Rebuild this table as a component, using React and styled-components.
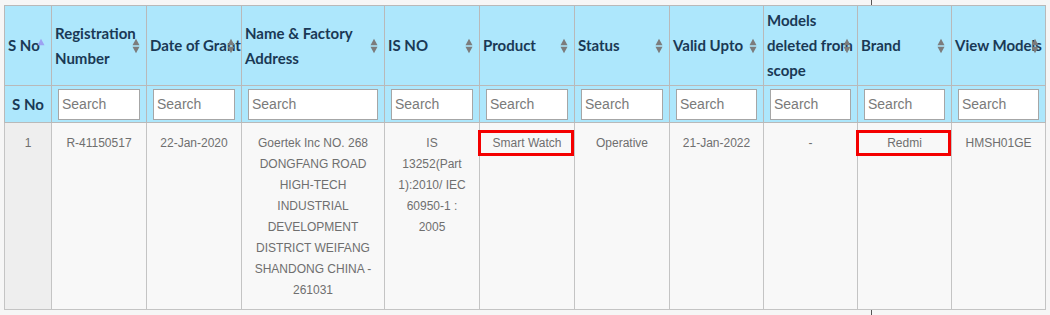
import React from 'react';
import styled, { createGlobalStyle } from 'styled-components';

const GlobalStyle = createGlobalStyle`
  html, body {
    margin: 0;
    padding: 0;
    background: #f6f6f6;
  }
`;

const COLUMNS = [
  { key: 'sno', label: 'S No', width: 47, sort: 'asc' },
  { key: 'reg', label: 'Registration Number', width: 95 },
  { key: 'date', label: 'Date of Grant', width: 95, nowrap: true },
  { key: 'name', label: 'Name & Factory Address', width: 143 },
  { key: 'isno', label: 'IS NO', width: 95 },
  { key: 'product', label: 'Product', width: 95 },
  { key: 'status', label: 'Status', width: 95 },
  { key: 'valid', label: 'Valid Upto', width: 94 },
  { key: 'deleted', label: 'Models deleted from scope', width: 94 },
  { key: 'brand', label: 'Brand', width: 94 },
  { key: 'models', label: 'View Models', width: 94, nowrap: true },
];

const ROWS = [
  {
    sno: '1',
    reg: 'R-41150517',
    date: '22-Jan-2020',
    name: 'Goertek Inc NO. 268 DONGFANG ROAD HIGH-TECH INDUSTRIAL DEVELOPMENT DISTRICT WEIFANG SHANDONG CHINA - 261031',
    isno: 'IS 13252(Part 1):2010/ IEC 60950-1 : 2005',
    product: 'Smart Watch',
    status: 'Operative',
    valid: '21-Jan-2022',
    deleted: '-',
    brand: 'Redmi',
    models: 'HMSH01GE',
  },
];

const MARKED = ['product', 'brand'];

const SortIcon = ({ dir }) => (
  <SortMark width="8" height="16" viewBox="0 0 8 16">
    <path d="M0.5 7.2 L4 0.8 L7.5 7.2 Z" fill={dir === 'asc' ? '#9da2f2' : '#7c7c7c'} />
    {dir !== 'asc' && <path d="M0.5 8.8 L4 15.2 L7.5 8.8 Z" fill="#7c7c7c" />}
  </SortMark>
);

const App = () => (
  <Page>
    <GlobalStyle />
    <Table>
      <colgroup>
        {COLUMNS.map(c => (
          <col key={c.key} style={{ width: c.width }} />
        ))}
      </colgroup>
      <thead>
        <HeadRow>
          {COLUMNS.map(c => (
            <HeadCell key={c.key} $nowrap={c.nowrap}>
              {c.label}
              <SortIcon dir={c.sort} />
            </HeadCell>
          ))}
        </HeadRow>
        <FilterRow>
          {COLUMNS.map(c =>
            c.key === 'sno' ? (
              <FilterLabel key={c.key}>S No</FilterLabel>
            ) : (
              <FilterCell key={c.key}>
                <SearchInput placeholder="Search" />
              </FilterCell>
            )
          )}
        </FilterRow>
      </thead>
      <tbody>
        {ROWS.map(r => (
          <tr key={r.reg}>
            {COLUMNS.map(c => (
              <Cell key={c.key} $sorted={c.key === 'sno'} $wide={c.key === 'name'}>
                {r[c.key]}
                {MARKED.includes(c.key) && <Marker />}
              </Cell>
            ))}
          </tr>
        ))}
      </tbody>
    </Table>
  </Page>
);

const Page = styled.div`
  position: relative;
  padding: 5px 0 7px 4px;

  &::before {
    content: '';
    position: absolute;
    left: 871px;
    top: 0;
    bottom: 0;
    width: 1px;
    background: #555;
  }
`;

const Table = styled.table`
  position: relative;
  border-collapse: collapse;
  table-layout: fixed;
  width: 1042px;
  border: 1px solid #b9b9b9;
`;

const HeadRow = styled.tr`
  height: 80px;
  background: #ade7fc;
`;

const HeadCell = styled.th`
  position: relative;
  padding: 0 1px 0 3px;
  border: 1px solid #b9b9b9;
  text-align: left;
  vertical-align: middle;
  white-space: ${p => (p.$nowrap ? 'nowrap' : 'normal')};
  font-family: Lato, 'Open Sans', sans-serif;
  font-weight: 700;
  font-size: 15px;
  line-height: 25px;
  color: #1a3955;
`;

const SortMark = styled.svg`
  position: absolute;
  right: 6px;
  top: 50%;
  margin-top: -8px;
`;

const FilterRow = styled.tr`
  height: 37px;
  background: #ade7fc;
`;

const FilterCell = styled.th`
  padding: 0 6px;
  border: 1px solid #b9b9b9;
  vertical-align: middle;
`;

const FilterLabel = styled(FilterCell)`
  padding: 0;
  text-align: center;
  font-family: Lato, 'Open Sans', sans-serif;
  font-weight: 700;
  font-size: 15px;
  color: #1a3955;
`;

const SearchInput = styled.input`
  display: block;
  box-sizing: border-box;
  width: 100%;
  height: 31px;
  margin: 0;
  padding: 0 3px;
  border: 1px solid #a6a6a6;
  border-radius: 0;
  background: #fff;
  font-family: 'Liberation Sans', Arial, sans-serif;
  font-size: 14px;
  color: #333;
  outline: none;

  &::placeholder {
    color: #7a7a7a;
  }
`;

const Cell = styled.td`
  position: relative;
  height: 186px;
  box-sizing: border-box;
  padding: 10px ${p => (p.$wide ? 8 : 10)}px 8px;
  border: 1px solid #c4c4c4;
  background: ${p => (p.$sorted ? '#eeeeee' : '#f8f8f8')};
  text-align: center;
  vertical-align: top;
  font-family: 'Liberation Sans', Arial, sans-serif;
  font-size: 12px;
  line-height: 21px;
  color: #6f6f6f;
`;

const Marker = styled.span`
  position: absolute;
  left: -2px;
  right: 0;
  top: 7px;
  height: 26px;
  box-sizing: border-box;
  border: 3px solid #f40000;
`;

export default App;
